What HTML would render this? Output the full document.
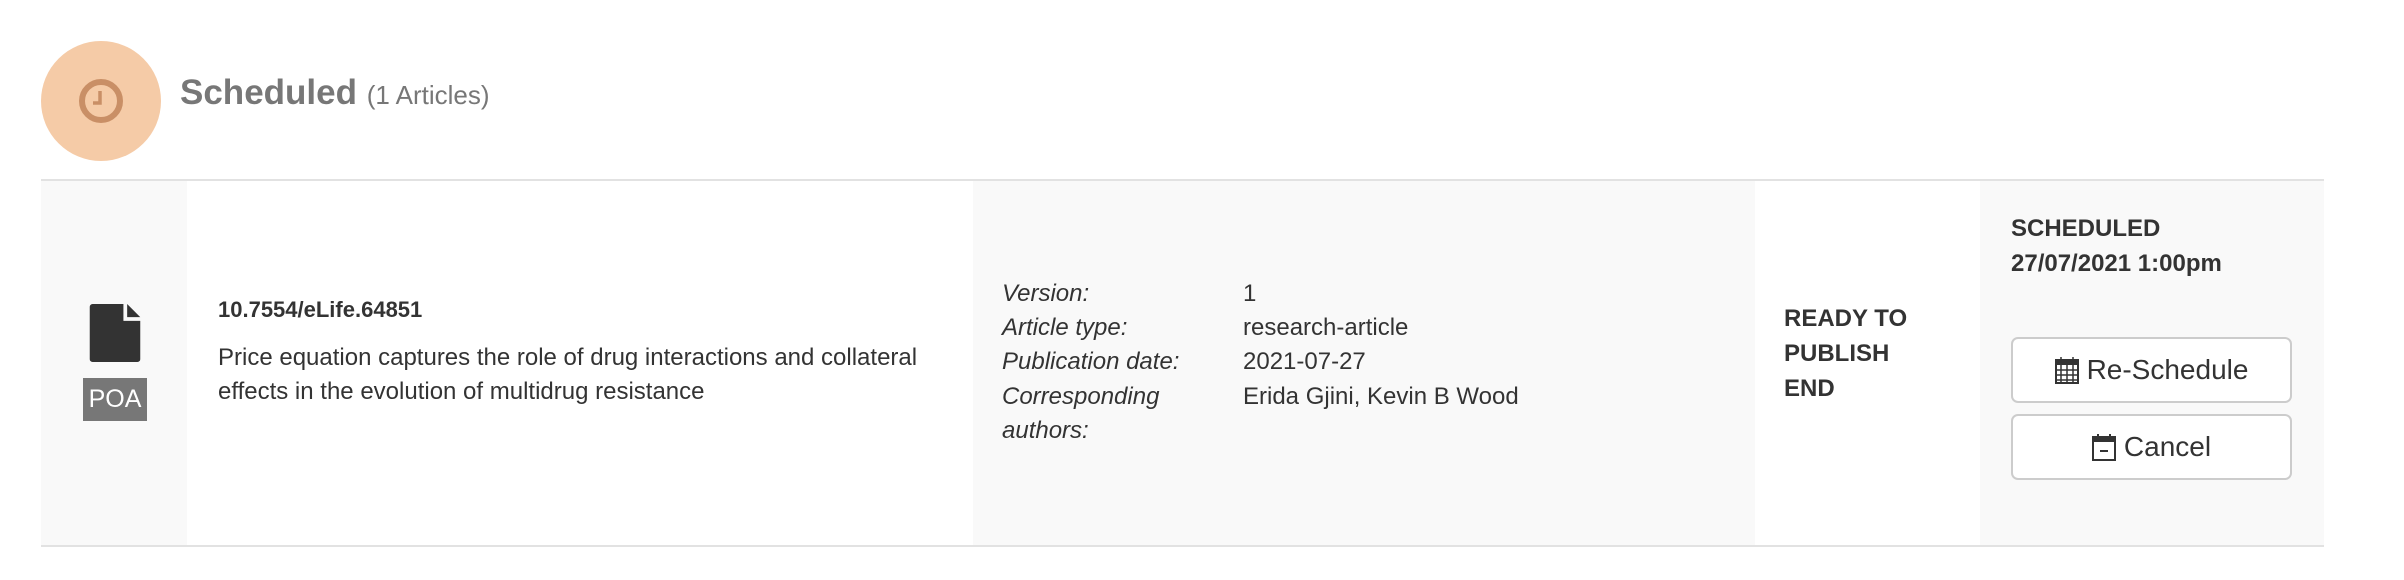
<!DOCTYPE html>
<html><head><meta charset="utf-8"><style>
*{margin:0;padding:0;box-sizing:border-box}
body{width:2404px;height:580px;background:#fff;font-family:"Liberation Sans",Arial,sans-serif;color:#333;position:relative;overflow:hidden}
.a{position:absolute;white-space:nowrap}
.circ{position:absolute;left:41px;top:41px;width:120px;height:120px;border-radius:50%;background:#f5cba7}
.title{left:180px;top:73px;font-size:35px;line-height:40px;font-weight:bold;color:#777}
.title span{font-size:26px;font-weight:normal}
.row{position:absolute;left:41px;top:179px;width:2283px;height:368px;border-top:2px solid #e2e2e2;border-bottom:2px solid #e2e2e2;background:#f9f9f9}
.w{position:absolute;top:0;bottom:0;background:#fff}
.t{font-size:24px;color:#333}
.it{font-style:italic}
.b{font-weight:bold}
.btn{position:absolute;left:2011px;width:281px;border:2px solid #ccc;border-radius:7px;background:#fff;font-size:28px;color:#333;display:flex;align-items:center;justify-content:center;gap:8px}
</style></head><body>
<div class="circ"></div>
<svg class="a" style="left:70px;top:70px" width="62" height="62" viewBox="0 0 62 62"><circle cx="31" cy="31" r="19" fill="none" stroke="#c98f66" stroke-width="6"/><path d="M30 21v12h-7" fill="none" stroke="#c98f66" stroke-width="3.5"/></svg>
<div class="a title">Scheduled <span>(1 Articles)</span></div>
<div class="row">
 <div class="w" style="left:146px;width:786px"></div>
 <div class="w" style="left:1714px;width:225px"></div>
</div>
<svg class="a" style="left:89px;top:304px" width="52" height="58" viewBox="0 0 54 62"><path d="M3 0h33v18h18v41a3 3 0 0 1-3 3H3a3 3 0 0 1-3-3V3a3 3 0 0 1 3-3z" fill="#333"/><path d="M40 0l14 14H40z" fill="#333"/></svg>
<div class="a" style="left:83px;top:378px;width:64px;height:43px;background:#777;color:#fff;font-size:25px;text-align:center;line-height:43px">POA</div>
<div class="a t b" style="left:218px;top:295px;font-size:22px;line-height:30px">10.7554/eLife.64851</div>
<div class="a t" style="left:218px;top:341px;line-height:34px">Price equation captures the role of drug interactions and collateral<br>effects in the evolution of multidrug resistance</div>
<div class="a t it" style="left:1002px;top:277px;line-height:34.2px">Version:<br>Article type:<br>Publication date:<br>Corresponding<br>authors:</div>
<div class="a t" style="left:1243px;top:277px;line-height:34.2px">1<br>research-article<br>2021-07-27<br>Erida Gjini, Kevin B Wood</div>
<div class="a t b" style="left:1784px;top:301px;line-height:35px">READY TO<br>PUBLISH<br>END</div>
<div class="a t b" style="left:2011px;top:211px;line-height:35px">SCHEDULED<br>27/07/2021 1:00pm</div>
<div class="btn" style="top:337px;height:66px"><svg width="24" height="28" viewBox="0 0 24 28"><rect x="1" y="4" width="22" height="23" fill="none" stroke="#333" stroke-width="2"/><rect x="1" y="4" width="22" height="5" fill="#333"/><path d="M6 1v6M18 1v6M1 14h22M1 19h22M1 24h22M6 9v18M12 9v18M18 9v18" stroke="#333" stroke-width="1.5"/></svg>Re-Schedule</div>
<div class="btn" style="top:414px;height:66px"><svg width="24" height="28" viewBox="0 0 24 28"><rect x="1" y="4" width="22" height="23" fill="none" stroke="#333" stroke-width="2"/><rect x="1" y="4" width="22" height="5" fill="#333"/><path d="M6 1v6M18 1v6M8 18h8" stroke="#333" stroke-width="2"/></svg>Cancel</div>
</body></html>
